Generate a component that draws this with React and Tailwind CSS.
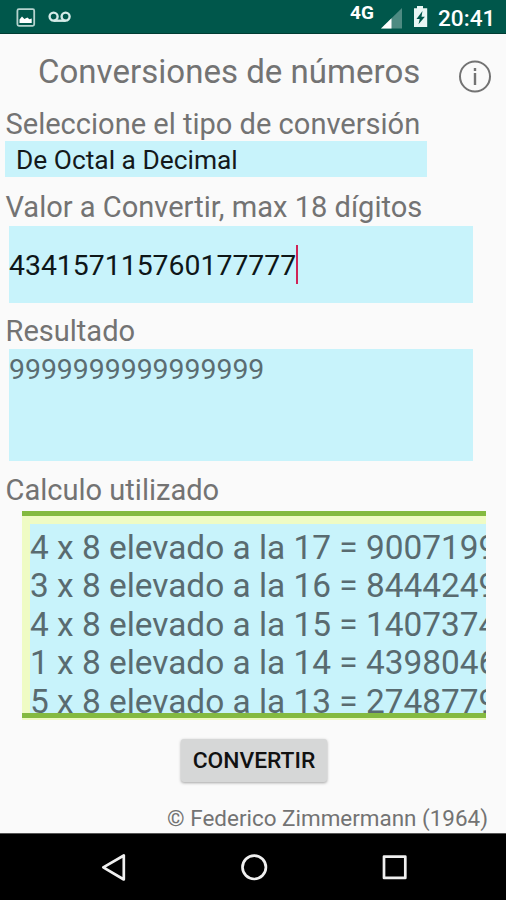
const steps = [
  "4 x 8 elevado a la 17 = 9007199254740992",
  "3 x 8 elevado a la 16 = 844424930131968",
  "4 x 8 elevado a la 15 = 140737488355328",
  "1 x 8 elevado a la 14 = 4398046511104",
  "5 x 8 elevado a la 13 = 2748779069440",
];

function StatusBar() {
  return (
    <header className="flex h-[34px] shrink-0 justify-between border-b border-[#003d33] bg-[#00574b]">
      <svg className="h-[33px] w-20" viewBox="0 0 80 33" fill="none">
        <rect x="17.4" y="9.2" width="16.8" height="16.6" rx="1.5" stroke="#b5d3ce" strokeWidth="1.8" />
        <path d="M19.5 23v-3.5l2.5-3 2.4 2.6 3-1.5 2 1.6 2.3-.6V23z" fill="#fff" />
        <g stroke="#d5ebe8" strokeWidth="2.4">
          <circle cx="53.6" cy="16.6" r="4" />
          <circle cx="65.6" cy="16.6" r="4" />
          <path d="M53.6 20.7h12" />
        </g>
      </svg>
      <div className="flex pr-3 text-white">
        <span className="mt-[2px] w-[26px] text-[19px] leading-[22px] font-bold">4G</span>
        <svg className="h-[33px] w-[62px]" viewBox="376 0 62 33">
          <path d="M381 28.5L402 8v20.5z" fill="#4e8b82" />
          <path d="M381 28.5L391.5 18.3v10.2z" fill="#fff" />
          <path d="M414 8.3h3V6h6v2.3h4.2V27H414z" fill="#e9f6f4" />
          <path d="M422.5 11l-6 8h3.2l-1.2 5.2 6.4-7.4h-3.4z" fill="#00574b" />
        </svg>
        <span className="mt-[5px] w-[56px] text-[22.6px] leading-7 font-medium whitespace-nowrap">20:41</span>
      </div>
    </header>
  );
}

function Label({ children, className }) {
  return <div className={`h-[33px] pl-[5.5px] text-[29.05px] whitespace-nowrap ${className}`}>{children}</div>;
}

export default function App() {
  return (
    <div className="flex h-[900px] w-[506px] flex-col overflow-hidden bg-[#fafafa] font-['Roboto',sans-serif] text-[#737373]">
      <StatusBar />
      <main className="flex h-[800px] shrink-0 flex-col">
        <div className="flex h-[73px] shrink-0 justify-between pr-[14px] pl-[38px]">
          <h1 className="mt-[18px] text-[33px] leading-[39px] tracking-[0.03px] whitespace-nowrap">Conversiones de números</h1>
          <svg className="mt-[25px] h-[34px] w-[34px]" viewBox="0 0 34 34" fill="none" stroke="#737373">
            <circle cx="17" cy="17.5" r="15" strokeWidth="2" />
            <path d="M17 14v12M17 9v3" strokeWidth="2.4" />
          </svg>
        </div>
        <Label className="leading-[35px]">Seleccione el tipo de conversión</Label>
        <div className="mt-[1px] ml-[5px] h-9 w-[422px] shrink-0 bg-[#c8f3fb] pl-[11px] text-[26.35px] leading-[38px] text-[#14191b]">De Octal a Decimal</div>
        <Label className="mt-[13px] leading-[35px]">Valor a Convertir, max 18 dígitos</Label>
        <div className="mt-[3px] ml-[9px] flex h-[77px] w-[464px] shrink-0 items-center bg-[#c8f3fb] text-[28.4px] text-[#0e1618]">
          <span className="pt-[3px]">434157115760177777</span>
          <span className="h-[39px] w-[2px] bg-[#cf2456]" />
        </div>
        <Label className="mt-[12px] leading-[33px]">Resultado</Label>
        <div className="mt-[1px] ml-[9px] h-28 w-[464px] shrink-0 bg-[#c8f3fb] pt-[3px] text-[28.4px] leading-[35px] text-[#5b6d71]">9999999999999999</div>
        <Label className="mt-[12px] leading-[35px]">Calculo utilizado</Label>
        <div className="mt-[5px] ml-[22px] h-[209px] w-[464px] shrink-0 overflow-hidden bg-[#effbc4] pb-[2px]">
          <div className="h-[207px] overflow-hidden border-y-[5.5px] border-[#84ba40] pt-2 pl-2">
            <div className="h-[190px] bg-[#c8f3fb] pt-[4.5px] text-[33.4px] leading-[38.5px] whitespace-nowrap text-[#596b70]">
              {steps.map((s) => <div key={s}>{s}</div>)}
            </div>
          </div>
        </div>
        <button className="mt-[19px] ml-[181px] h-[43px] w-[146px] shrink-0 rounded-[3px] bg-[#d6d7d7] text-[22.8px] leading-[43px] font-medium text-[#111] shadow-[0_1px_3px_rgba(0,0,0,0.35)]">CONVERTIR</button>
        <footer className="mt-[23px] mr-[18px] text-right text-[22.45px] leading-[27px]">© Federico Zimmermann (1964)</footer>
      </main>
      <nav className="-mt-px h-[67px] shrink-0 border-t border-[#555] bg-black">
        <svg className="h-[66px] w-[506px]" viewBox="0 834 506 66" fill="none" stroke="#f0f0f0" strokeWidth="2.7" strokeLinejoin="round">
          <path d="M123.8 855.5v24L103.3 867.3z" />
          <circle cx="254.2" cy="867.3" r="11.7" />
          <rect x="384" y="856.6" width="21.3" height="21.3" />
        </svg>
      </nav>
    </div>
  );
}
